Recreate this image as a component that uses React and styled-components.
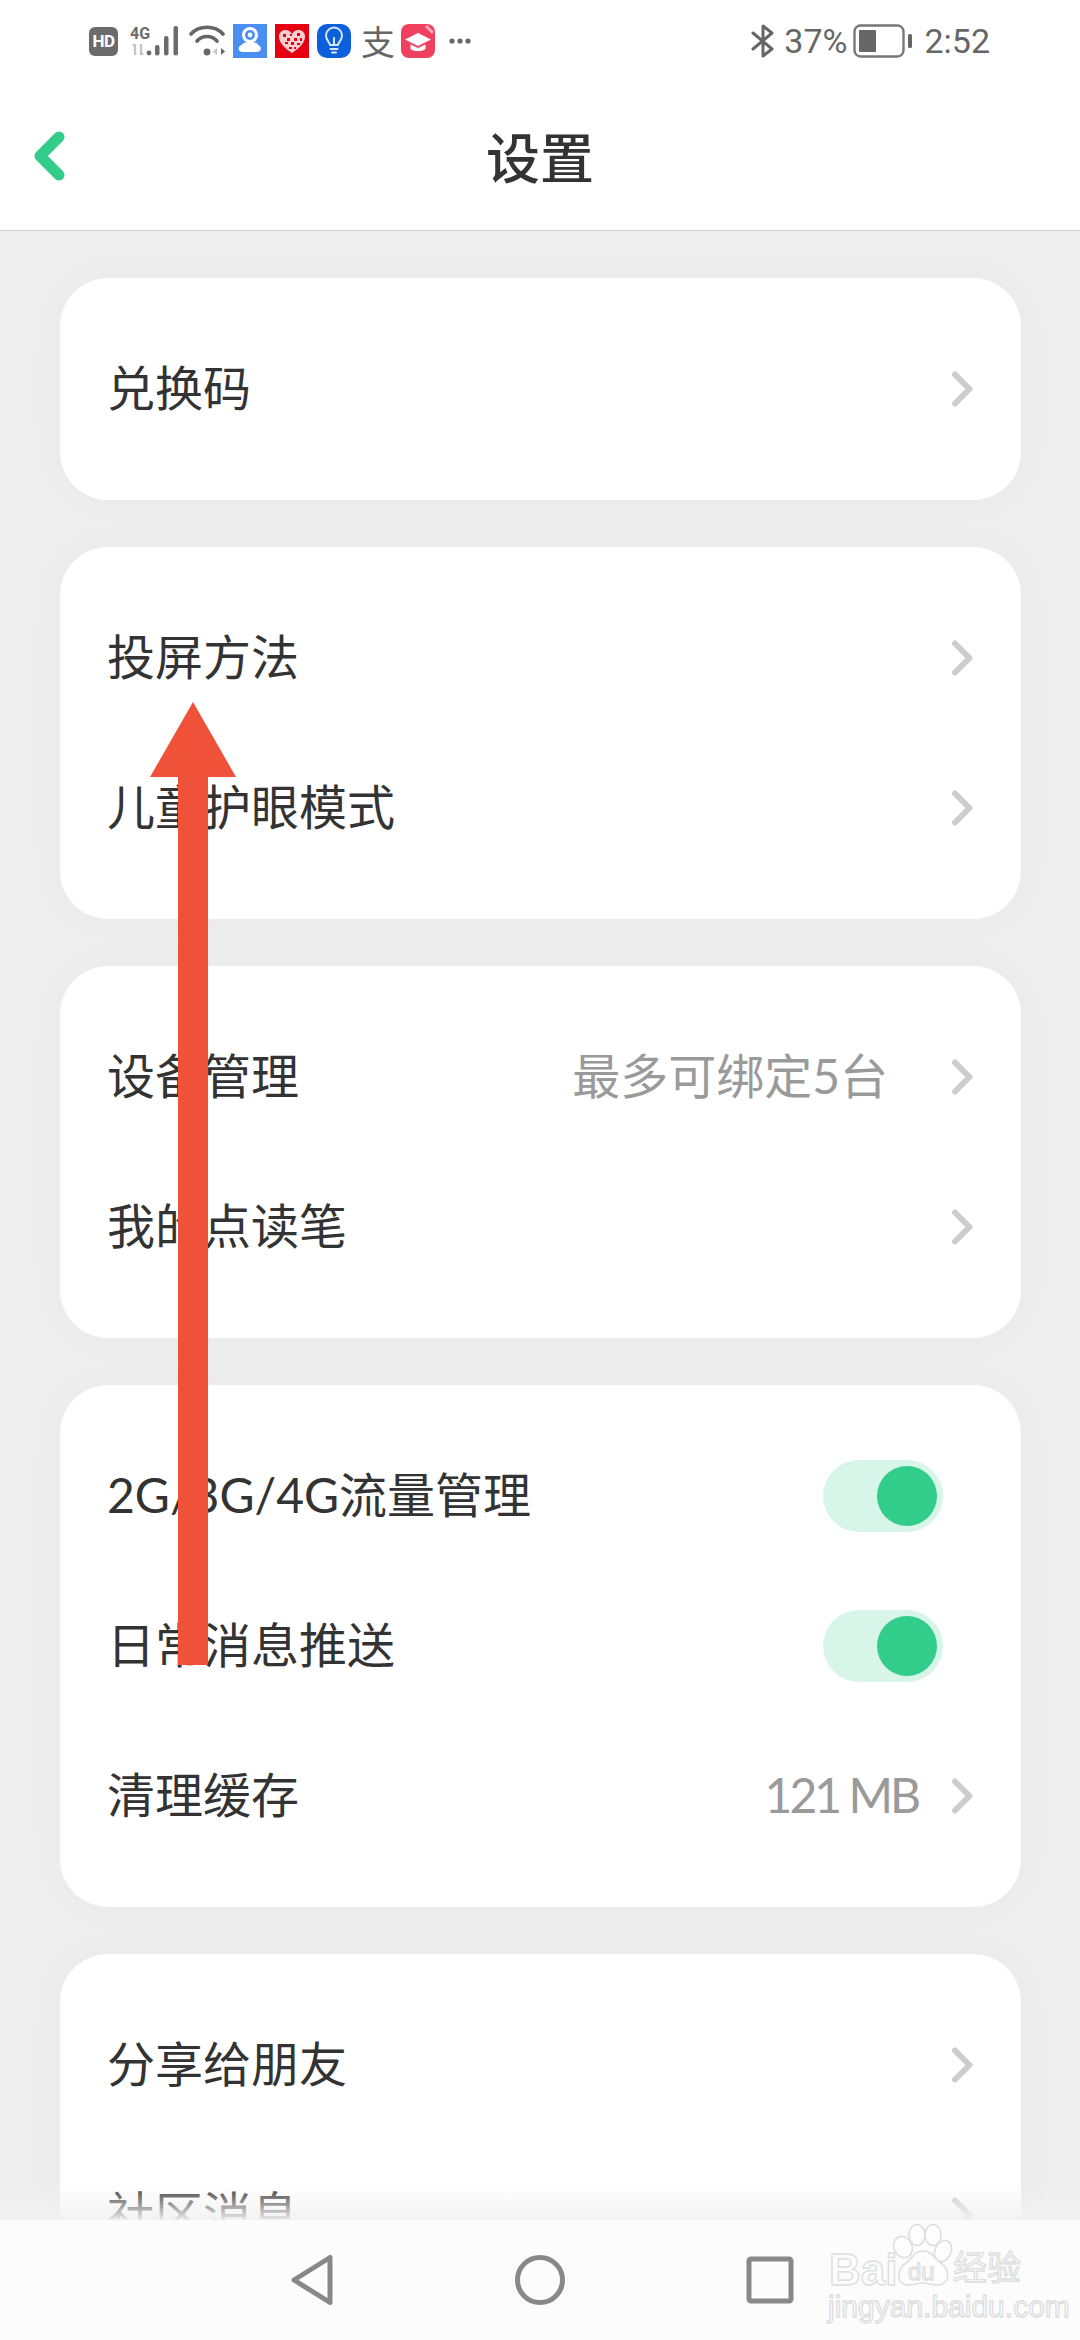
import React from "react";
import styled, { createGlobalStyle } from "styled-components";

const Global = createGlobalStyle`
  html, body { margin: 0; padding: 0; background: #eeeeee; }
  * { box-sizing: border-box; }
`;

const Page = styled.div`
  position: relative; width: 1080px; height: 2340px; overflow: hidden;
  display: flex; flex-direction: column; background: #eeeeee;
  font-family: Lato, "Noto Sans CJK SC", sans-serif; color: #333;
`;
const Top = styled.header`
  height: 231px; flex: none; background: #fff; border-bottom: 1px solid #cfcfcf;
  display: flex; flex-direction: column;
`;
const StatusBar = styled.div`
  height: 82px; padding: 24px 90px 0 89px; display: flex; align-items: flex-start;
  justify-content: space-between; color: #666;
`;
const StatusGroup = styled.div`
  display: flex; align-items: center; height: 34px;
`;
const Spacer = styled.span`
  flex: none; width: ${p => p.$w}px;
`;
const StatusText = styled.span`
  font-family: Roboto, sans-serif; font-size: 34px; line-height: 34px; color: #666;
`;
const HdBadge = styled.span`
  width: 29px; height: 29px; border-radius: 6px; background: #6b6b6b; color: #fff;
  font: 700 17px/29px "Roboto", sans-serif; text-align: center; letter-spacing: -.5px;
`;
const AppTile = styled.span`
  width: 34px; height: 34px; flex: none; display: flex; align-items: center; justify-content: center;
  background: ${p => p.$bg}; border-radius: ${p => p.$r || 0}px; overflow: hidden;
`;
const AliGlyph = styled.span`
  width: 34px; font: 400 34px/34px "Noto Sans CJK SC", sans-serif; color: #666; text-align: center;
`;
const TitleRow = styled.div`
  flex: 1; display: grid; grid-template-columns: 1fr auto 1fr; align-items: start; padding-top: 38px;
`;
const BackButton = styled.span`
  padding: 11px 0 0 32px; display: flex; line-height: 0;
`;
const Title = styled.h1`
  margin: 0; font-size: 54px; line-height: 72px; font-weight: 500; color: #333;
  font-family: "Noto Sans CJK SC", sans-serif;
`;
const Scroller = styled.main`
  position: relative; flex: 1; min-height: 0; overflow: hidden;
  padding: 47px 59px 0 60px; display: flex; flex-direction: column; gap: 47px;
`;
const Card = styled.section`
  flex: none; background: #fff; border-radius: 48px; padding: 36px 0;
  box-shadow: 0 0 46px rgba(0,0,0,.022);
`;
const Row = styled.div`
  height: 150px; padding: 0 47px; display: flex; align-items: center;
`;
const Label = styled.span`
  flex: 1; font-size: 48px; line-height: 60px; padding-bottom: 3px; color: #333; white-space: nowrap;
`;
const Value = styled.span`
  font-size: 48px; line-height: 60px; padding-bottom: 3px; color: #9a9a9a; white-space: nowrap;
  margin-right: ${p => p.$mr}px; letter-spacing: ${p => p.$ls || 0}px;
`;
const ChevronIcon = styled.svg`
  width: 24px; height: 38px; flex: none; display: block;
`;
const Track = styled.span`
  width: 120px; height: 72px; border-radius: 36px; background: #d8f5ea; margin-right: 31px;
  padding: 6px; display: flex; justify-content: flex-end; align-items: center;
`;
const Knob = styled.span`
  width: 60px; height: 60px; border-radius: 50%; background: #32cc8b;
`;
const Fade = styled.div`
  position: absolute; left: 0; right: 0; bottom: 0; height: 36px; pointer-events: none;
  background: linear-gradient(rgba(242,242,242,0), rgba(242,242,242,.95));
`;
const NavBar = styled.nav`
  height: 120px; flex: none; background: #fcfcfc; display: flex; justify-content: center;
  align-items: center; gap: 170px;
`;
const NavIcon = styled.svg`
  width: 60px; height: 60px; display: block;
`;
const Arrow = styled.svg`
  position: absolute; left: 150px; top: 702px; width: 86px; height: 963px;
`;
const Watermark = styled.div`
  position: absolute; left: 826px; top: 2224px; width: 200px; height: 96px; pointer-events: none;
  color: transparent; -webkit-text-stroke: 1.3px #dedede;
`;
const WmText = styled.div`
  position: absolute; left: ${p => p.$l}px; top: ${p => p.$t}px; font-size: ${p => p.$s}px; line-height: 1;
  font-weight: ${p => p.$w || 400}; white-space: nowrap;
  font-family: ${p => p.$cjk ? '"Noto Sans CJK SC", sans-serif' : '"Liberation Sans", sans-serif'};
`;
const WmPaw = styled.svg`
  position: absolute; left: 0; top: 0; width: 200px; height: 66px;
`;

const Chevron = () => (
  <ChevronIcon viewBox="0 0 24 38">
    <path d="M5 4.500 L19.500 19 L5 33.500" fill="none" stroke="#cdcdcd" strokeWidth="6" strokeLinecap="round" strokeLinejoin="round" />
  </ChevronIcon>
);
const Toggle = () => <Track><Knob /></Track>;

const Signal = () => (
  <svg width="50" height="34" viewBox="0 0 50 34">
    <text x="0" y="15" fontFamily="Roboto, sans-serif" fontWeight="700" fontSize="16" fill="#6b6b6b">4G</text>
    <path d="M5 20v11M3 22l2-2M11 20v11M13 29l-2 2" stroke="#c5c5c5" strokeWidth="2.400" fill="none" />
    <circle cx="19" cy="29" r="2.400" fill="#6b6b6b" />
    <rect x="25" y="21" width="4.500" height="10.500" rx="2" fill="#6b6b6b" />
    <rect x="34" y="12" width="4.500" height="19.500" rx="2" fill="#6b6b6b" />
    <rect x="43.500" y="2" width="4.500" height="29.500" rx="2" fill="#6b6b6b" />
  </svg>
);
const Wifi = () => (
  <svg width="38" height="34" viewBox="0 0 38 34">
    <g fill="none" stroke="#666" strokeWidth="3.600" strokeLinecap="round">
      <path d="M2 10C10 1 26 1 34 10" />
      <path d="M8 17C13 11 23 11 28 17" />
    </g>
    <circle cx="18" cy="28" r="3.400" fill="#666" />
    <path d="M28 24v7l-4-3.500z" fill="#c5c5c5" />
    <path d="M32 24v7l4-3.500z" fill="#666" />
  </svg>
);
const CamIcon = () => (
  <AppTile $bg="#4a8ef2">
    <svg width="34" height="34" viewBox="0 0 34 34">
      <path d="M9 21c0-2 4-3 8-3s8 1 8 3c4 1 4 7-1 7H9c-4 0-5-6 0-7z" fill="#fff" />
      <circle cx="17" cy="11" r="8" fill="#fff" />
      <circle cx="17" cy="11" r="5" fill="#4a8ef2" />
      <circle cx="17" cy="11" r="2.400" fill="#fff" />
    </svg>
  </AppTile>
);
const HeartIcon = () => (
  <AppTile $bg="#e60012">
    <svg width="34" height="34" viewBox="0 0 34 34">
      <path d="M17 29C8 23 4 18 4 12.500 4 8.500 7 6 10.500 6c3 0 5 1.500 6.500 4C18.500 7.500 20.500 6 23.500 6 27 6 30 8.500 30 12.500 30 18 26 23 17 29z" fill="#f7cfcf" />
      <g fill="#e60012">
        <rect x="8" y="10" width="3" height="3" /><rect x="12" y="14" width="3" height="3" /><rect x="15" y="10" width="2" height="2" />
        <rect x="22" y="9" width="3" height="3" /><rect x="19" y="14" width="3" height="3" /><rect x="25" y="14" width="2" height="3" />
        <rect x="10" y="18" width="3" height="2" /><rect x="16" y="18" width="3" height="3" /><rect x="22" y="19" width="3" height="2" />
        <rect x="14" y="23" width="3" height="2" /><rect x="19" y="23" width="2" height="2" />
      </g>
    </svg>
  </AppTile>
);
const BulbIcon = () => (
  <AppTile $bg="#0d5fdc" $r={10}>
    <svg width="34" height="34" viewBox="0 0 34 34">
      <path d="M13 21c0-3-4-4-4-9.500a8 8 0 0 1 16 0C25 17 21 18 21 21z" fill="none" stroke="#d8e8ff" strokeWidth="2" strokeLinejoin="round" />
      <path d="M13.500 25h7M15 28.500h4M17 21v-7" stroke="#d8e8ff" strokeWidth="2" strokeLinecap="round" />
    </svg>
  </AppTile>
);
const CapIcon = () => (
  <AppTile $bg="#f0405f" $r={8}>
    <svg width="34" height="34" viewBox="0 0 34 34">
      <path d="M17 9L4 15.500 17 22l13-6.500z" fill="#fff" />
      <path d="M9.500 20.500V25c4 3 11 3 15 0v-4.500L17 24z" fill="#fff" />
      <path d="M25 2l7 7" stroke="#f7a8b6" strokeWidth="3" />
    </svg>
  </AppTile>
);
const Dots = () => (
  <svg width="22" height="34" viewBox="0 0 22 34">
    <circle cx="3" cy="17" r="2.600" fill="#666" /><circle cx="11" cy="17" r="2.600" fill="#666" /><circle cx="19" cy="17" r="2.600" fill="#666" />
  </svg>
);
const Bluetooth = () => (
  <svg width="24" height="34" viewBox="0 0 24 34">
    <path d="M2 9l19 16-9 7V2l9 7L2 25" fill="none" stroke="#666" strokeWidth="3" strokeLinejoin="round" strokeLinecap="round" />
  </svg>
);
const Battery = () => (
  <svg width="60" height="34" viewBox="0 0 60 34">
    <rect x="1.500" y="1.500" width="49" height="31" rx="6" fill="none" stroke="#777" strokeWidth="2.400" />
    <rect x="6" y="6" width="17" height="22" rx="1" fill="#666" />
    <rect x="55" y="10" width="4" height="14" rx="1.500" fill="#666" />
  </svg>
);

export default function App() {
  return (
    <Page>
      <Global />
      <Top>
        <StatusBar>
          <StatusGroup>
            <HdBadge>HD</HdBadge>
            <Spacer $w={12} />
            <Signal />
            <Spacer $w={9} />
            <Wifi />
            <Spacer $w={6} />
            <CamIcon />
            <Spacer $w={8} />
            <HeartIcon />
            <Spacer $w={8} />
            <BulbIcon />
            <Spacer $w={10} />
            <AliGlyph>支</AliGlyph>
            <Spacer $w={6} />
            <CapIcon />
            <Spacer $w={14} />
            <Dots />
          </StatusGroup>
          <StatusGroup>
            <Bluetooth />
            <Spacer $w={9} />
            <StatusText>37%</StatusText>
            <Spacer $w={6} />
            <Battery />
            <Spacer $w={11} />
            <StatusText>2:52</StatusText>
          </StatusGroup>
        </StatusBar>
        <TitleRow>
          <BackButton>
            <svg width="34" height="50" viewBox="0 0 34 50">
              <path d="M27 6L8 25l19 19" fill="none" stroke="#32cc8b" strokeWidth="11" strokeLinecap="round" strokeLinejoin="round" />
            </svg>
          </BackButton>
          <Title>设置</Title>
          <span />
        </TitleRow>
      </Top>
      <Scroller>
        <Card>
          <Row><Label>兑换码</Label><Chevron /></Row>
        </Card>
        <Card>
          <Row><Label>投屏方法</Label><Chevron /></Row>
          <Row><Label>儿童护眼模式</Label><Chevron /></Row>
        </Card>
        <Card>
          <Row><Label>设备管理</Label><Value $mr={62}>最多可绑定5台</Value><Chevron /></Row>
          <Row><Label>我的点读笔</Label><Chevron /></Row>
        </Card>
        <Card>
          <Row><Label>2G/3G/4G流量管理</Label><Toggle /></Row>
          <Row><Label>日常消息推送</Label><Toggle /></Row>
          <Row><Label>清理缓存</Label><Value $mr={32} $ls={-3}>121 MB</Value><Chevron /></Row>
        </Card>
        <Card>
          <Row><Label>分享给朋友</Label><Chevron /></Row>
          <Row><Label>社区消息</Label><Chevron /></Row>
        </Card>
        <Fade />
      </Scroller>
      <NavBar>
        <NavIcon viewBox="0 0 60 60">
          <path d="M50 7.500V52.500L14 30z" fill="none" stroke="#888" strokeWidth="5" strokeLinejoin="round" />
        </NavIcon>
        <NavIcon viewBox="0 0 60 60">
          <circle cx="30" cy="30" r="22.500" fill="none" stroke="#888" strokeWidth="5" />
        </NavIcon>
        <NavIcon viewBox="0 0 60 60">
          <rect x="9" y="9" width="42" height="42" rx="2" fill="none" stroke="#888" strokeWidth="5" />
        </NavIcon>
      </NavBar>
      <Arrow viewBox="0 0 86 963">
        <path d="M43 0L86 75H58V963H28V75H0z" fill="#ef5239" />
      </Arrow>
      <Watermark>
        <WmText $l={3} $t={24} $s={44} $w={700}>Bai</WmText>
        <WmPaw viewBox="0 0 200 66">
          <g fill="#fdfdfd" stroke="#dedede" strokeWidth="1.600">
            <ellipse cx="77" cy="23" rx="9" ry="11" transform="rotate(-25 77 23)" />
            <ellipse cx="91" cy="11" rx="8" ry="10.500" />
            <ellipse cx="107" cy="11" rx="8" ry="10.500" />
            <ellipse cx="117" cy="27" rx="8" ry="11" transform="rotate(25 117 27)" />
            <path d="M97 27c-9 0-11 8-17 12-9 6-11 22 3 22 5 0 9-2 14-2s9 2 14 2c14 0 13-16 4-22-6-4-9-12-18-12z" />
          </g>
        </WmPaw>
        <WmText $l={82} $t={36} $s={24}>du</WmText>
        <WmText $l={127} $t={25} $s={34} $cjk>经验</WmText>
        <WmText $l={2} $t={68} $s={30}>jingyan.baidu.com</WmText>
      </Watermark>
    </Page>
  );
}
